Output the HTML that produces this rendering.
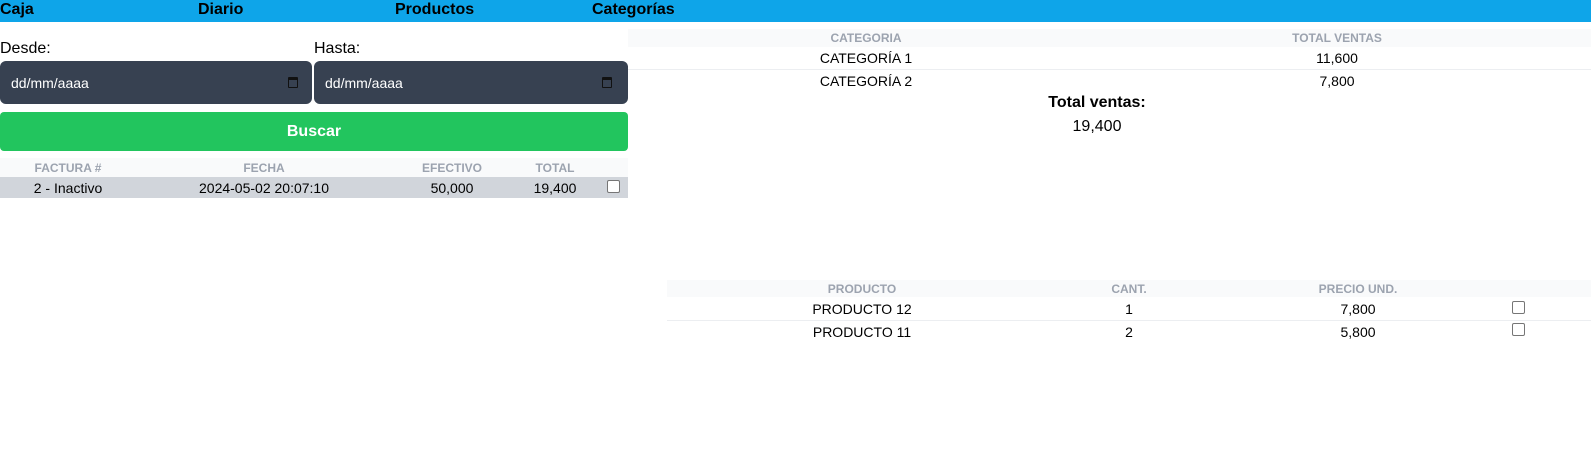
<!DOCTYPE html>
<html><head><meta charset="utf-8"><style>
*{margin:0;padding:0;box-sizing:border-box}
body{width:1591px;height:450px;background:#fff;font-family:"Liberation Sans",Arial,sans-serif;position:relative;overflow:hidden;color:#000}
.a{position:absolute;white-space:nowrap}
.c{transform:translateX(-50%)}
.nav{position:absolute;left:0;top:0;width:1591px;height:22px;background:#0ea5e9}
.nav span{position:absolute;top:1px;font-weight:bold;font-size:16px}
.inp{position:absolute;top:61px;height:43px;background:#374151;border-radius:6px;color:#fff;font-size:14px}
.inp span{position:absolute;left:11px;top:14px}
.cal{position:absolute;top:16px;width:10px;height:11px;border:1.5px solid #111;border-top-width:3px;border-radius:1px}
.h{font-size:12px;font-weight:bold;color:#9ca3af}
.t{font-size:14px}
.cb{position:absolute;width:13px;height:13px;border:1px solid #767676;border-radius:2px;background:#fff}
</style></head><body>
<div class="nav"><span style="left:0">Caja</span><span style="left:198px">Diario</span><span style="left:395px">Productos</span><span style="left:592px">Categorías</span></div>
<div class="a" style="left:0;top:40px;font-size:16px">Desde:</div>
<div class="a" style="left:314px;top:40px;font-size:16px">Hasta:</div>
<div class="inp" style="left:0;width:312px"><span>dd/mm/aaaa</span><div class="cal" style="left:288px"></div></div>
<div class="inp" style="left:314px;width:314px"><span>dd/mm/aaaa</span><div class="cal" style="left:288px"></div></div>
<div class="a" style="left:0;top:112px;width:628px;height:39px;background:#22c55e;border-radius:4px;color:#fff;font-weight:bold;font-size:16px;text-align:center;line-height:39px">Buscar</div>
<div class="a" style="left:0;top:158px;width:628px;height:19px;background:#f9fafb"></div>
<div class="a" style="left:0;top:177px;width:628px;height:21px;background:#d1d5db"></div>
<div class="a c h" style="left:68px;top:161px">FACTURA #</div>
<div class="a c h" style="left:264px;top:161px">FECHA</div>
<div class="a c h" style="left:452px;top:161px">EFECTIVO</div>
<div class="a c h" style="left:555px;top:161px">TOTAL</div>
<div class="a c t" style="left:68px;top:180px">2 - Inactivo</div>
<div class="a c t" style="left:264px;top:180px">2024-05-02 20:07:10</div>
<div class="a c t" style="left:452px;top:180px">50,000</div>
<div class="a c t" style="left:555px;top:180px">19,400</div>
<div class="cb" style="left:607px;top:180px"></div>

<div class="a" style="left:628px;top:29px;width:963px;height:18px;background:#f9fafb"></div>
<div class="a c h" style="left:866px;top:31px">CATEGORIA</div>
<div class="a c h" style="left:1337px;top:31px">TOTAL VENTAS</div>
<div class="a" style="left:628px;top:69px;width:963px;height:1px;background:#eceef1"></div>
<div class="a c t" style="left:866px;top:50px">CATEGORÍA 1</div>
<div class="a c t" style="left:1337px;top:50px">11,600</div>
<div class="a c t" style="left:866px;top:73px">CATEGORÍA 2</div>
<div class="a c t" style="left:1337px;top:73px">7,800</div>
<div class="a c" style="left:1097px;top:94px;font-weight:bold;font-size:16px">Total ventas:</div>
<div class="a c" style="left:1097px;top:118px;font-size:16px">19,400</div>

<div class="a" style="left:667px;top:280px;width:924px;height:17px;background:#f9fafb"></div>
<div class="a c h" style="left:862px;top:282px">PRODUCTO</div>
<div class="a c h" style="left:1129px;top:282px">CANT.</div>
<div class="a c h" style="left:1358px;top:282px">PRECIO UND.</div>
<div class="a" style="left:667px;top:320px;width:924px;height:1px;background:#eceef1"></div>
<div class="a c t" style="left:862px;top:301px">PRODUCTO 12</div>
<div class="a c t" style="left:1129px;top:301px">1</div>
<div class="a c t" style="left:1358px;top:301px">7,800</div>
<div class="cb" style="left:1512px;top:301px"></div>
<div class="a c t" style="left:862px;top:324px">PRODUCTO 11</div>
<div class="a c t" style="left:1129px;top:324px">2</div>
<div class="a c t" style="left:1358px;top:324px">5,800</div>
<div class="cb" style="left:1512px;top:323px"></div>
</body></html>
